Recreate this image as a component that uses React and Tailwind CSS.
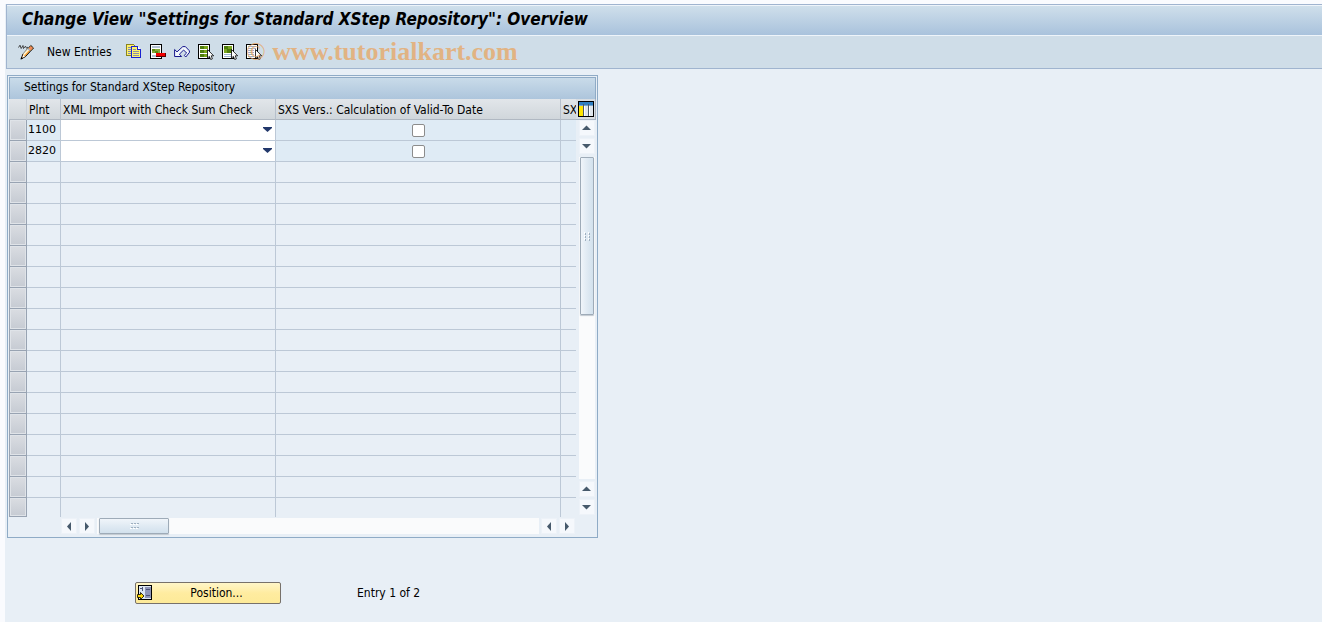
import React from "react";

const svgProps = {
  width: 16,
  height: 16,
  viewBox: "0 0 16 16",
  shapeRendering: "crispEdges",
  "aria-hidden": true,
};

function PencilIcon() {
  return (
    <svg {...svgProps} shapeRendering="auto">
      <path d="M0.5 3.5 L2 1.2 L3.2 4.5 L5 1.5 L5.5 4.5 L7.5 2.2 L8.5 4.2 L10 3" fill="none" stroke="#333" strokeWidth="0.9" />
      <path d="M12.8 1.5 L15.5 4 L7.5 12.6 L3.2 14.9 L4.8 10.2 Z" fill="#f9a53c" stroke="#111" strokeWidth="1" />
      <path d="M12.8 2.2 L14.8 4.1 L13 6 L10.8 4.2 Z" fill="#f08a5c" />
      <path d="M11 4.8 L5.6 10.6" stroke="#fff6d6" strokeWidth="1.8" />
      <path d="M10.2 5 L12.4 7" stroke="#6b8fd0" strokeWidth="1" />
      <path d="M5.2 10.8 L7 12.4 L4.4 13.8 Z" fill="#fff" />
      <path d="M3.2 13 L5 14.4 L2.6 15.4 Z" fill="#000" />
    </svg>
  );
}

function CopyIcon() {
  return (
    <svg {...svgProps}>
      <path d="M0.5 0.5 H7.5 L9.5 2.5 V11.5 H0.5 Z" fill="#fff06a" stroke="#8a8420" />
      <path d="M2 3.5 H5 M2 5.5 H5 M2 7.5 H5 M2 9.5 H5" stroke="#7d87b0" />
      <path d="M5.5 2.5 H11.5 L14.5 5.5 V13.5 H5.5 Z" fill="#fff36a" stroke="#1a22d0" />
      <path d="M11.5 2.5 V5.5 H14.5" fill="#fff" stroke="#1a22d0" />
      <path d="M7 5.5 H10 M7 7.5 H13 M7 9.5 H13 M7 11.5 H13" stroke="#8a90a8" />
    </svg>
  );
}

function DeleteIcon() {
  return (
    <svg {...svgProps}>
      <rect x="0.5" y="0.5" width="11" height="14" fill="#fff" stroke="#000" />
      <path d="M2 2.5 H10 M2 11.5 H6" stroke="#b3c1d2" strokeWidth="2" />
      <rect x="2" y="5" width="8" height="4" fill="#84a838" />
      <path d="M2 5 H5 V7 H2 Z M5 7 H8 V9 H5 Z" fill="#5d8a10" />
      <rect x="6" y="9" width="10" height="4" fill="#5a0000" />
      <rect x="6" y="9" width="9" height="3" fill="#f00000" />
    </svg>
  );
}

function UndoIcon() {
  return (
    <svg {...svgProps} shapeRendering="auto">
      <path
        d="M0.6 5.5 V12.5 H7.6 L5.4 10.2 L9.6 6 L12.6 9 L10.2 11.4 L11.8 13 L15.6 8.2 L15.2 6.6 L11.4 2.6 L8.8 2.6 L3 7.9 Z"
        fill="#f1f6fc"
        stroke="#16168c"
        strokeWidth="1"
        strokeLinejoin="round"
      />
    </svg>
  );
}

function Cursor() {
  return (
    <path
      d="M9.5 5.5 V14 L11.4 12.4 L12.7 15.5 L14.4 14.8 L13.2 11.8 H15.7 Z"
      fill="#fff"
      stroke="#000"
      strokeWidth="0.8"
      shapeRendering="auto"
    />
  );
}

function SelectAllIcon() {
  return (
    <svg {...svgProps}>
      <rect x="0.5" y="0.5" width="11" height="14" fill="#fff" stroke="#000" />
      <path d="M2 3.5 H10 M2 7.5 H10 M2 11.5 H10" stroke="#7aa61a" strokeWidth="3" />
      <path d="M2 3.5 H6 M2 7.5 H6 M2 11.5 H6" stroke="#4f7d0c" strokeWidth="3" />
      <Cursor />
    </svg>
  );
}

function SelectBlockIcon() {
  return (
    <svg {...svgProps}>
      <rect x="0.5" y="0.5" width="11" height="14" fill="#fff" stroke="#000" />
      <rect x="2" y="2" width="8" height="7" fill="#4f7d0c" />
      <path d="M6 2 H10 V5 H6 Z M2 5 H5 V9 H2 Z" fill="#78a420" />
      <path d="M2 10.5 H9 M2 12.5 H9" stroke="#9db6d4" />
      <Cursor />
    </svg>
  );
}

function DeselectIcon() {
  return (
    <svg {...svgProps}>
      <rect x="0.5" y="0.5" width="11" height="14" fill="#fff" stroke="#000" />
      <path d="M2 2.5 H10 M2 4.5 H10 M2 6.5 H8 M2 8.5 H8 M2 10.5 H8 M2 12.5 H8" stroke="#9cacc2" />
      <Cursor />
    </svg>
  );
}

function ColumnsIcon() {
  return (
    <svg {...svgProps}>
      <rect x="0.5" y="0.5" width="15" height="15" fill="#fff" stroke="#000" />
      <rect x="1" y="1" width="14" height="3" fill="#2f7fc1" />
      <path d="M1 4.5 H15" stroke="#7aa6cc" />
      <rect x="1" y="5" width="4" height="10" fill="#ffe600" />
      <rect x="7" y="5" width="3" height="10" fill="#dfe6ec" />
      <rect x="12" y="5" width="3" height="10" fill="#dfe6ec" />
      <path d="M5.5 3 V15 M10.5 3 V15" stroke="#4a5a6a" />
    </svg>
  );
}

function PositionIcon() {
  return (
    <svg {...svgProps}>
      <rect x="1.5" y="0.5" width="13" height="14" fill="#dce6f2" stroke="#000" />
      <rect x="8" y="2" width="6" height="11" fill="#8d94b8" />
      <path d="M3 3.5 H6 M5.5 2 V6 M9 4.5 H13 M9 10.5 H13" stroke="#4c5478" />
      <path d="M0.5 9.5 H3.5 V7.5 L7 11 L3.5 14.5 V12.5 H0.5 Z" fill="#ffd800" stroke="#000" strokeWidth="0.8" shapeRendering="auto" />
    </svg>
  );
}

const toolbar = [
  ["Copy As...", CopyIcon],
  ["Delete", DeleteIcon],
  ["Undo Change", UndoIcon],
  ["Select All", SelectAllIcon],
  ["Select Block", SelectBlockIcon],
  ["Deselect All", DeselectIcon],
];

const arrows = {
  up: "M0 6 L4.5 1.5 L9 6 Z",
  down: "M0 2 H9 L4.5 6.5 Z",
  left: "M6 0 V9 L2 4.5 Z",
  right: "M2 0 V9 L6 4.5 Z",
};

function ScrollButton({ dir }) {
  const vertical = dir === "up" || dir === "down";
  return (
    <button aria-label={"Scroll " + dir} className="flex size-4 shrink-0 items-center justify-center border border-[#edf2f8] bg-[#f5f8fc]">
      <svg width={vertical ? 9 : 8} height={vertical ? 8 : 9} viewBox={vertical ? "0 0 9 8" : "0 0 8 9"} aria-hidden="true">
        <path d={arrows[dir]} fill="#46596b" />
      </svg>
    </button>
  );
}

function Grip() {
  return (
    <svg width="9" height="9" viewBox="0 0 9 9" shapeRendering="crispEdges" aria-hidden="true">
      <path d="M1 1h2v1h-2z M4 1h2v1h-2z M7 1h2v1h-2z M1 5h2v1h-2z M4 5h2v1h-2z M7 5h2v1h-2z" fill="#9fb0c0" />
      <path d="M0 2h2v1h-2z M3 2h2v1h-2z M6 2h2v1h-2z M0 6h2v1h-2z M3 6h2v1h-2z M6 6h2v1h-2z" fill="#fff" />
    </svg>
  );
}

const rows = ["1100", "2820", ...Array(17).fill("")];
const headCell =
  "h-[21px] border-b border-[#b0b8c2] bg-linear-to-b from-[#e2e6ea] to-[#d0d6db] p-0 pt-[2px] pl-[2px] text-left font-normal overflow-hidden";

function EntriesTable() {
  return (
    <table className="w-full table-fixed border-separate border-spacing-0 whitespace-nowrap">
      <colgroup>
        <col className="w-[18px]" />
        <col className="w-[34px]" />
        <col className="w-[215px]" />
        <col className="w-[285px]" />
        <col />
      </colgroup>
      <thead>
        <tr>
          <th aria-label="Row selection" className={headCell + " border-r border-r-[#c8ced6]"} />
          <th scope="col" className={headCell + " border-r border-r-[#b6c0cc]"}>Plnt</th>
          <th scope="col" className={headCell + " border-r border-r-[#b6c0cc]"}>XML Import with Check Sum Check</th>
          <th scope="col" className={headCell + " border-r border-r-[#b6c0cc]"}>SXS Vers.: Calculation of Valid-To Date</th>
          <th scope="col" className={headCell}>SX</th>
        </tr>
      </thead>
      <tbody>
        {rows.map((plant, i) => {
          const last = i === rows.length - 1;
          const cell =
            "p-0 border-[#bcc8d6] " + (last ? "h-[19px] " : "h-[21px] border-b ") + (plant ? "bg-[#dfebf5] " : "");
          return (
            <tr key={i}>
              <td className={"border-x border-b border-[#98a3b2] bg-linear-to-b from-[#dadde2] to-[#c6cbd3] p-0 shadow-[inset_0_0_0_1px_#dfe3e8] " + (last ? "h-[19px]" : "h-[21px]")} />
              <td className={cell + "border-r pl-px font-['DejaVu_Sans',sans-serif] text-[11px]"}>{plant}</td>
              <td className={cell + "border-r"}>
                {plant && (
                  <div className="grid h-5 items-center bg-white">
                    <select aria-label={"XML import check for plant " + plant} className="col-start-1 row-start-1 h-5 w-full appearance-none bg-white outline-none">
                      <option></option>
                    </select>
                    <svg width="9" height="5" viewBox="0 0 9 5" className="pointer-events-none col-start-1 row-start-1 mr-[3px] mb-[2px] justify-self-end" aria-hidden="true">
                      <path d="M0 0 H9 V1 L4.5 5 L0 1 Z" fill="#22386b" />
                    </svg>
                  </div>
                )}
              </td>
              <td className={cell + "border-r"}>
                {plant && (
                  <div className="flex justify-center">
                    <input
                      type="checkbox"
                      aria-label={"Calculate valid-to date for plant " + plant}
                      className="size-[13px] appearance-none rounded-[2px] border border-[#8c8c8c] bg-white"
                    />
                  </div>
                )}
              </td>
              <td className={cell} />
            </tr>
          );
        })}
      </tbody>
    </table>
  );
}

export default function App() {
  return (
    <div className="flex min-h-screen flex-col bg-[#fafbfe] pt-1 pl-[5px] font-['DejaVu_Sans_Condensed','Noto_Sans',sans-serif] text-[12px] leading-4 text-black">
      <div className="flex-1 bg-[#e8eff6] pl-px">
        <header className="border-y border-l border-[#a0b4cf]">
          <h1 className="h-[31px] border-t border-b border-[#eef4fa] bg-linear-to-b from-[#cfdfeb] to-[#a9c2dc] pl-[15px] text-[17px] leading-[26px] font-bold italic">
            Change View "Settings for Standard XStep Repository": Overview
          </h1>
          <div className="relative flex h-8 items-center bg-[#cfdde8] pl-[11px]">
            <button aria-label="Display / Change" className="shrink-0"><PencilIcon /></button>
            <button className="shrink-0 px-[14px] pl-[13px]">New Entries</button>
            <div className="flex gap-2">
              {toolbar.map(([label, Icon]) => (
                <button key={label} aria-label={label}><Icon /></button>
              ))}
            </div>
            <span className="pointer-events-none absolute top-0 left-[239px] font-['Liberation_Serif',serif] text-[26px] leading-8 text-[#e8a562]/75">
              © <span className="font-bold">www.tutorialkart.com</span>
            </span>
          </div>
        </header>

        <main className="px-px pt-[6px]">
          <section className="w-[591px] max-w-full border border-[#8fabc6] p-px pb-[2px]">
            <h2 className="h-[22px] border border-b-0 border-[#8fabc6] bg-linear-to-b from-[#c9dbe9] to-[#adc5dc] pl-[14px] leading-[18px]">
              Settings for Standard XStep Repository
            </h2>
            <div className="flex">
              <div className="min-w-0 flex-1">
                <EntriesTable />
              </div>
              <div className="flex w-[20px] flex-col">
                <div className="flex h-[21px] items-center border-r border-b border-[#a8b4c2] bg-[#d8dde2] pl-[2px]">
                  <button aria-label="Configuration"><ColumnsIcon /></button>
                </div>
                <div className="flex flex-1 flex-col items-center gap-[2px] pb-[2px] pl-px">
                  <ScrollButton dir="up" />
                  <ScrollButton dir="down" />
                  <div className="mt-px w-4 flex-1 bg-[#fafbfc] px-px">
                    <div className="flex h-[158px] items-center justify-center rounded-[1px] border border-[#9eabb8] bg-linear-to-r from-[#f0f5fa] via-[#e0eaf3] to-[#d2e1ed] shadow-[0_1px_1px_#c0c8d0]">
                      <span className="rotate-90"><Grip /></span>
                    </div>
                  </div>
                  <ScrollButton dir="up" />
                  <ScrollButton dir="down" />
                </div>
              </div>
            </div>
            <div className="mt-px mb-px flex items-center gap-[2px] pr-[21px] pl-[52px]">
              <ScrollButton dir="left" />
              <ScrollButton dir="right" />
              <div className="h-4 flex-1 bg-[#fafbfc] pl-[2px]">
                <div className="flex h-4 w-[70px] items-center justify-center rounded-[1px] border border-[#9eabb8] bg-linear-to-b from-[#f0f5fa] via-[#e0eaf3] to-[#d2e1ed] shadow-[0_1px_1px_#c0c8d0]">
                  <Grip />
                </div>
              </div>
              <ScrollButton dir="left" />
              <ScrollButton dir="right" />
            </div>
          </section>

          <div className="mt-11 flex items-center gap-[76px] pb-4 pl-32">
            <button className="flex h-[22px] w-[146px] items-center rounded-[2px] border border-[#77716a] bg-linear-to-b from-[#fff6c8] via-[#ffeca0] to-[#fdea98] pl-px">
              <PositionIcon />
              <span className="flex-1 text-center">Position...</span>
            </button>
            <p>Entry 1 of 2</p>
          </div>
        </main>
      </div>
    </div>
  );
}
